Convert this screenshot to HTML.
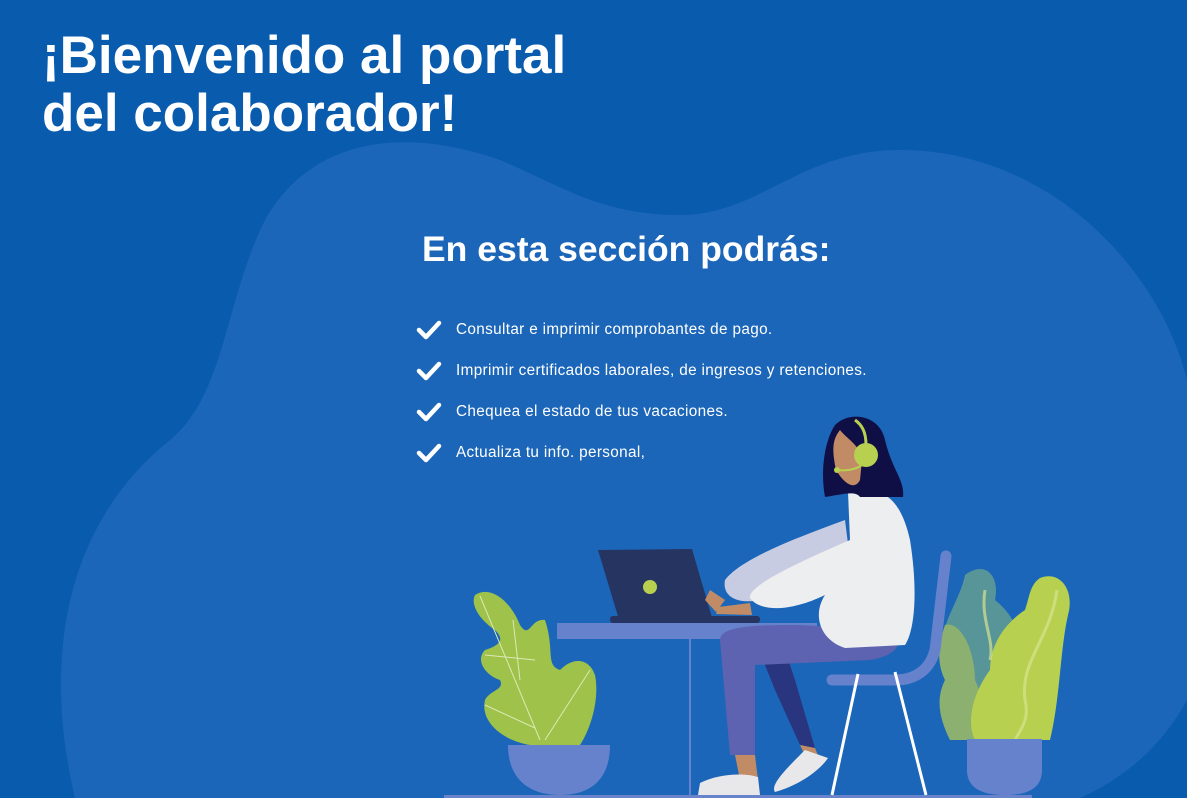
<!DOCTYPE html>
<html><head><meta charset="utf-8"><style>
html,body{margin:0;padding:0}
body{width:1187px;height:798px;overflow:hidden;background:#085bad;position:relative;font-family:"Liberation Sans",sans-serif;color:#fff}
svg{position:absolute;left:0;top:0}
h1{position:absolute;left:42px;top:27px;margin:0;font-size:53px;line-height:58px;font-weight:bold}
h2{position:absolute;left:422px;top:229px;margin:0;font-size:35.5px;font-weight:bold}
ul{position:absolute;left:416px;top:317px;margin:0;padding:0;list-style:none}
li{height:41px;font-size:15.3px;line-height:26px;display:flex;align-items:flex-start;letter-spacing:0.35px}
li svg{position:static;margin-right:14px;margin-top:3px}
</style></head><body>
<svg width="1187" height="798" viewBox="0 0 1187 798">
<path d="M75 798 C40 650 70 520 170 440 C225 395 225 300 265 220 C310 140 400 125 500 160 C560 185 600 215 680 215 C760 215 800 150 900 150 C1050 150 1160 270 1187 380 L1187 700 C1160 750 1120 780 1080 798 Z" fill="#1b66b8"/>
<rect x="444" y="795" width="588" height="3" fill="#6a84cc"/>
<path d="M475 595 C490 585 510 600 520 625 C530 640 530 618 545 620 C555 650 545 665 560 670 C575 655 590 660 595 675 C600 700 590 730 580 745 L530 745 C500 740 480 720 485 700 C490 690 505 690 500 680 C485 675 475 660 485 650 C500 645 505 640 495 630 C480 620 470 605 475 595Z" fill="#9fc24b"/>
<path d="M480 596 L540 740 M513 620 L520 680 M485 655 L535 660 M485 705 L535 728 M590 670 L545 740" stroke="#dce9b5" stroke-width="1" fill="none"/>
<path d="M508 745 L610 745 C610 780 590 795 560 795 C530 795 508 780 508 745Z" fill="#6682cc"/>
<path d="M965 575 C985 560 1000 575 995 600 C1020 620 1030 650 1010 700 L960 720 C945 690 940 660 945 640 C940 625 960 600 965 575Z" fill="#5e9a96" opacity="0.9"/>
<path d="M945 625 C960 620 975 650 975 680 C985 700 985 730 975 740 L950 740 C940 720 935 700 945 680 C935 660 940 640 945 625Z" fill="#8bb070"/>
<path d="M1040 578 C1060 570 1075 590 1068 615 C1060 650 1060 700 1050 740 L975 740 C965 720 975 690 990 670 C990 640 1010 620 1025 610 C1030 595 1030 585 1040 578Z" fill="#b8d050"/>
<path d="M1057 590 C1050 640 1020 660 1025 700 C1030 720 1020 730 1015 740 M985 590 C980 620 995 640 990 660" stroke="#d6e48e" stroke-width="3" fill="none" opacity="0.7"/>
<path d="M967 739 L1042 739 L1042 770 C1042 790 1025 795 1005 795 C985 795 967 790 967 770Z" fill="#6682cc"/>
<path d="M946 556 L935 650 C930 670 915 680 895 680 L832 680" stroke="#6682cc" stroke-width="11" stroke-linecap="round" fill="none"/>
<path d="M858 674 L832 795 M895 672 L926 795" stroke="#fff" stroke-width="3" fill="none"/>
<rect x="557" y="623" width="260" height="16" fill="#6682cc"/>
<rect x="689" y="639" width="2" height="156" fill="#6682cc"/>
<path d="M755 640 L775 690 L800 745 L815 748 L795 680 L785 650Z" fill="#2a3580"/>
<path d="M720 640 L730 755 L755 755 L755 665 L870 660 C900 655 905 640 890 630 L800 625 C760 625 720 625 720 640Z" fill="#5d63b0"/>
<path d="M735 755 L755 755 L758 780 L740 780Z M800 745 L815 748 L820 760 L808 762Z" fill="#c08b65"/>
<path d="M700 783 C720 773 745 773 758 777 L760 795 L698 795Z" fill="#e8e8ea"/>
<path d="M805 750 L828 758 C820 770 800 785 775 792 C770 785 785 770 805 750Z" fill="#e8e8ea"/>
<path d="M598 550 L692 549 L713 621 L620 623Z" fill="#263462"/>
<rect x="610" y="616" width="150" height="7" rx="3" fill="#263462"/>
<circle cx="650" cy="587" r="7" fill="#b8d050"/>
<path d="M710 590 L725 600 L716 612 L705 600Z M718 607 L750 603 L752 615 L716 614Z" fill="#c08b65"/>
<path d="M845 520 C790 540 740 560 725 580 C722 595 735 605 760 600 L850 560Z" fill="#c8cce2"/>
<path d="M848 492 C880 485 900 495 910 540 C918 590 915 630 905 645 L845 648 C820 640 812 615 825 595 C790 612 760 612 750 598 C748 588 780 570 850 540Z" fill="#eceef0"/>
<path d="M835 425 C850 410 880 415 885 440 C892 470 905 480 903 497 L860 497 C855 490 840 495 825 497 C820 470 825 440 835 425Z" fill="#0f0f45"/>
<path d="M840 430 C848 440 860 445 862 460 L860 480 C855 490 845 485 836 470 C832 450 832 440 840 430Z" fill="#c08b65"/>
<path d="M855 420 C862 425 866 432 866 445" stroke="#b8d050" stroke-width="3" fill="none"/>
<circle cx="866" cy="455" r="12" fill="#b8d050"/>
<path d="M862 465 C855 470 845 471 837 470" stroke="#b8d050" stroke-width="2" fill="none"/>
<circle cx="837" cy="470" r="3" fill="#b8d050"/>
</svg>
<h1>¡Bienvenido al portal<br>del colaborador!</h1>
<h2>En esta sección podrás:</h2>
<ul>
<li><svg width="26" height="20" viewBox="0 0 26 20"><path d="M3 10 L10 17 L23 3" stroke="#fff" stroke-width="4.5" fill="none" stroke-linecap="round" stroke-linejoin="round"/></svg>Consultar e imprimir comprobantes de pago.</li>
<li><svg width="26" height="20" viewBox="0 0 26 20"><path d="M3 10 L10 17 L23 3" stroke="#fff" stroke-width="4.5" fill="none" stroke-linecap="round" stroke-linejoin="round"/></svg>Imprimir certificados laborales, de ingresos y retenciones.</li>
<li><svg width="26" height="20" viewBox="0 0 26 20"><path d="M3 10 L10 17 L23 3" stroke="#fff" stroke-width="4.5" fill="none" stroke-linecap="round" stroke-linejoin="round"/></svg>Chequea el estado de tus vacaciones.</li>
<li><svg width="26" height="20" viewBox="0 0 26 20"><path d="M3 10 L10 17 L23 3" stroke="#fff" stroke-width="4.5" fill="none" stroke-linecap="round" stroke-linejoin="round"/></svg>Actualiza tu info. personal,</li>
</ul>
</body></html>
